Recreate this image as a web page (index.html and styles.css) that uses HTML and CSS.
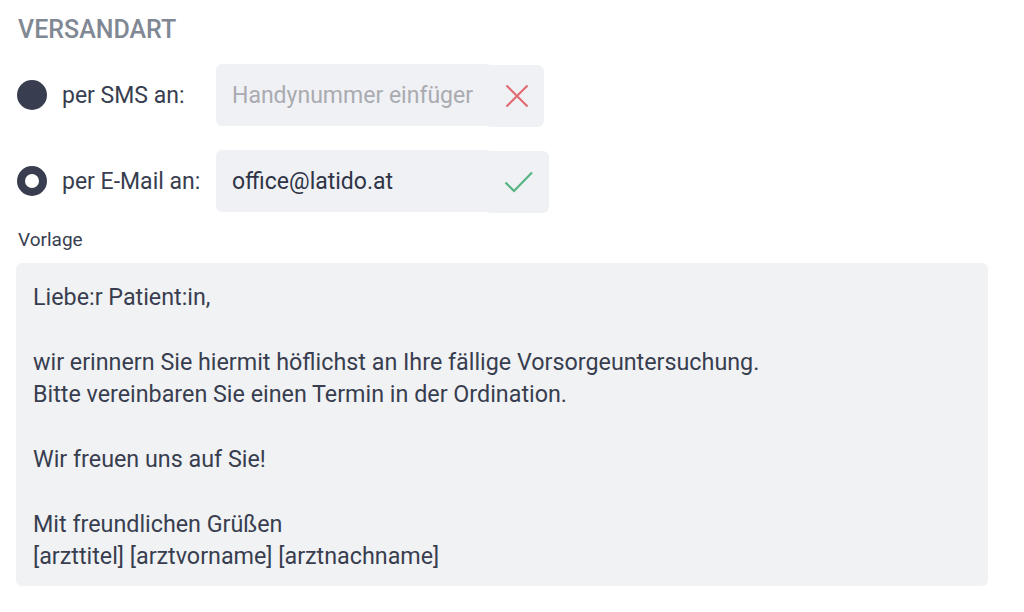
FILE: index.html
```html
<!DOCTYPE html>
<html lang="de">
<head>
<meta charset="utf-8">
<link rel="stylesheet" href="styles.css">
</head>
<body>
<div class="page">
  <h2 class="heading">VERSANDART</h2>
  <div class="options">
    <span class="radio radio-on"></span>
    <span class="opt-label">per SMS an:</span>
    <div class="field field-sms">
      <span class="field-text placeholder">Handynummer einfüger</span>
      <span class="field-icon">
        <svg width="24" height="24" viewBox="0 0 24 24"><path d="M1.5 1.5 L22.5 22.5 M22.5 1.5 L1.5 22.5" stroke="#e06b72" stroke-width="2.2" fill="none"/></svg>
      </span>
    </div>
    <span class="radio radio-off"></span>
    <span class="opt-label">per E-Mail an:</span>
    <div class="field field-mail">
      <span class="field-text">office@latido.at</span>
      <span class="field-icon">
        <svg width="30" height="24" viewBox="0 0 30 24"><path d="M1.5 12.5 L10 21 L28 2.5" stroke="#55b482" stroke-width="2.2" fill="none"/></svg>
      </span>
    </div>
  </div>
  <div class="tpl-label">Vorlage</div>
  <div class="template">
    <p>Liebe:r Patient:in,</p>
    <p>wir erinnern Sie hiermit höflichst an Ihre fällige Vorsorgeuntersuchung.<br>Bitte vereinbaren Sie einen Termin in der Ordination.</p>
    <p>Wir freuen uns auf Sie!</p>
    <p>Mit freundlichen Grüßen<br>[arzttitel] [arztvorname] [arztnachname]</p>
  </div>
</div>
</body>
</html>
```

FILE: styles.css
```css
* { box-sizing: border-box; }
html, body { margin: 0; padding: 0; background: #fff; }
body {
  font-family: Roboto, "Liberation Sans", sans-serif;
  color: #383e4f;
}
.page {
  padding: 14px 36px 0 16px;
}
.heading {
  margin: 0 0 0 2px;
  font-size: 25px;
  font-weight: 500;
  color: #7f8893;
  line-height: 32px;
  letter-spacing: 0;
}
.options {
  margin-top: 18px;
  display: grid;
  grid-template-columns: 30px 139px auto;
  column-gap: 15px;
  row-gap: 24px;
  align-items: center;
  padding-left: 1px;
}
.radio {
  width: 30px;
  height: 30px;
  border-radius: 50%;
  display: block;
}
.radio-on { background: #383e50; }
.radio-off { border: 8.5px solid #383e50; background: #fff; }
.opt-label {
  font-size: 23px;
  color: #383e4f;
  white-space: nowrap;
}
.field {
  display: flex;
  align-items: stretch;
  height: 62px;
}
.field-sms { width: 328px; }
.field-mail { width: 333px; }
.field-text {
  flex: 1;
  background: #f0f1f5;
  border-radius: 6px 0 0 6px;
  display: flex;
  align-items: center;
  padding-left: 16px;
  font-size: 23px;
  white-space: nowrap;
  overflow: hidden;
  color: #2f3546;
}
.placeholder { color: #a9abb0; }
.field-icon {
  background: #f0f1f5;
  border-radius: 0 6px 6px 0;
  display: flex;
  align-items: center;
  justify-content: center;
  width: 55px;
  margin-top: 1px;
  margin-bottom: -1px;
}
.field-mail .field-icon { width: 60px; }
.tpl-label {
  margin: 18px 0 0 2px;
  font-size: 19px;
  line-height: 20px;
  color: #383e4f;
}
.template {
  margin-top: 13px;
  background: #f1f2f4;
  border-radius: 6px;
  padding: 18px 17px 14px 17px;
  font-size: 23.3px;
  line-height: 32px;
  color: #383e4f;
}
.template p { margin: 0 0 33px 0; }
.template p:last-child { margin-bottom: 0; }
```
